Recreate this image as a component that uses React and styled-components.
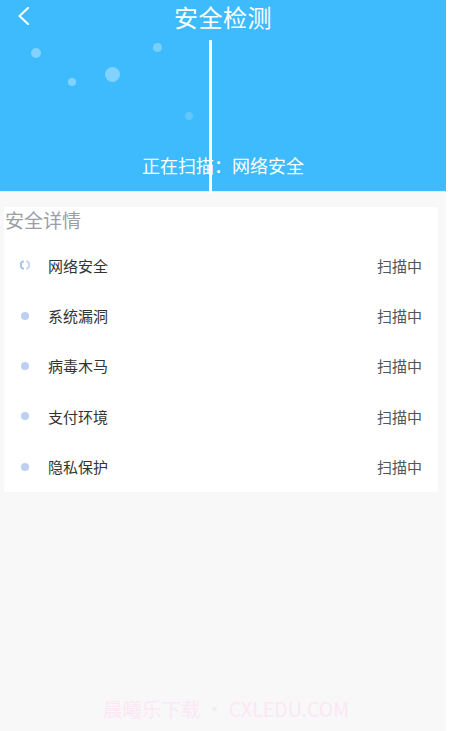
import React from "react";
import styled, { createGlobalStyle } from "styled-components";

const Global = createGlobalStyle`
  html, body { margin: 0; padding: 0; background: #ffffff; }
  body { font-family: "Noto Sans CJK SC", "Noto Sans", sans-serif; }
`;

const Page = styled.div`
  width: 446px;
  height: 731px;
  background: #f8f8f8;
  display: flex;
  flex-direction: column;
  position: relative;
  overflow: hidden;
`;

const Header = styled.header`
  height: 191px;
  background: #3ebbfd;
  border-bottom: 1px solid #d6effd;
  position: relative;
  display: flex;
  flex-direction: column;
  align-items: center;
`;

const TopBar = styled.div`
  width: 100%;
  height: 32px;
  padding-top: 1px;
  display: flex;
  align-items: center;
  justify-content: center;
  position: relative;
`;

const Back = styled.div`
  position: absolute;
  left: 17px;
  top: 6px;
  width: 13px;
  height: 18px;
`;

const Title = styled.h1`
  margin: 0;
  font-size: 24px;
  font-weight: 400;
  color: #ffffff;
  line-height: 28px;
  letter-spacing: 0.5px;
`;

const ScanText = styled.div`
  margin-top: auto;
  margin-bottom: 13px;
  font-size: 18px;
  color: #ffffff;
  line-height: 26px;
`;

const Bubble = styled.span`
  position: absolute;
  border-radius: 50%;
  background: rgba(255, 255, 255, ${(p) => p.$o});
  left: ${(p) => p.$x - p.$r}px;
  top: ${(p) => p.$y - p.$r}px;
  width: ${(p) => p.$r * 2}px;
  height: ${(p) => p.$r * 2}px;
`;

const ScanLine = styled.span`
  position: absolute;
  left: 209px;
  top: 40px;
  width: 3px;
  height: 153px;
  background: #ffffff;
  z-index: 2;
`;

const Body = styled.main`
  flex: 1;
  padding: 15px 8px 0 4px;
  display: flex;
  flex-direction: column;
`;

const Card = styled.section`
  background: #ffffff;
  display: flex;
  flex-direction: column;
`;

const CardTitle = styled.h2`
  margin: 0;
  padding: 0 0 0 1px;
  height: 33px;
  font-size: 19px;
  font-weight: 400;
  color: #9a9ea6;
  line-height: 26px;
`;

const Row = styled.div`
  height: 50.4px;
  display: flex;
  align-items: center;
  padding: 0 16px 0 16px;
`;

const Marker = styled.span`
  width: 10px;
  height: 10px;
  display: flex;
  align-items: center;
  justify-content: center;
  margin-right: 18px;
`;

const Dot = styled.span`
  width: 8px;
  height: 8px;
  border-radius: 50%;
  background: #bdd0f2;
`;

const Label = styled.span`
  flex: 1;
  font-size: 15px;
  color: #333333;
`;

const Status = styled.span`
  font-size: 15px;
  color: #555555;
`;

const Watermark = styled.div`
  margin-top: auto;
  margin-bottom: 8px;
  padding-left: 10px;
  text-align: center;
  font-size: 19.5px;
  color: #fbe7f5;
`;

const items = ["网络安全", "系统漏洞", "病毒木马", "支付环境", "隐私保护"];

const bubbles = [
  { x: 36, y: 53, r: 5, o: 0.35 },
  { x: 72, y: 82, r: 4, o: 0.35 },
  { x: 112, y: 74, r: 7.5, o: 0.35 },
  { x: 157, y: 47, r: 4.5, o: 0.3 },
  { x: 189, y: 116, r: 4, o: 0.18 },
];

function Spinner() {
  return (
    <svg width="10" height="10" viewBox="0 0 10 10">
      <path d="M3.8 1.1 A4 4 0 0 0 3.8 8.9" fill="none" stroke="#a4c0ec" strokeWidth="2" />
      <path d="M6.2 1.1 A4 4 0 0 1 6.2 8.9" fill="none" stroke="#c5d6f3" strokeWidth="2" />
    </svg>
  );
}

export default function App() {
  return (
    <>
      <Global />
      <Page>
        <Header>
          {bubbles.map((b, i) => (
            <Bubble key={i} $x={b.x} $y={b.y} $r={b.r} $o={b.o} />
          ))}
          <TopBar>
            <Back>
              <svg width="13" height="18" viewBox="0 0 13 18">
                <path d="M11 1 L2.5 9 L11 17" fill="none" stroke="#ffffff" strokeWidth="2" strokeLinecap="round" strokeLinejoin="round" />
              </svg>
            </Back>
            <Title>安全检测</Title>
          </TopBar>
          <ScanText>正在扫描：网络安全</ScanText>
        </Header>
        <ScanLine />
        <Body>
          <Card>
            <CardTitle>安全详情</CardTitle>
            {items.map((t, i) => (
              <Row key={t}>
                <Marker>{i === 0 ? <Spinner /> : <Dot />}</Marker>
                <Label>{t}</Label>
                <Status>扫描中</Status>
              </Row>
            ))}
          </Card>
          <Watermark>晨曦乐下载 · CXLEDU.COM</Watermark>
        </Body>
      </Page>
    </>
  );
}
